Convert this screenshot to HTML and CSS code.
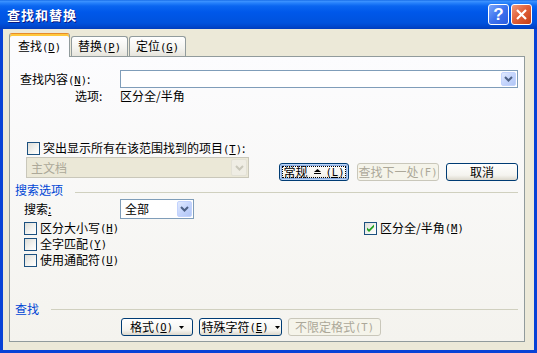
FILE: index.html
```html
<!DOCTYPE html>
<html lang="zh-CN">
<head>
    <meta charset="UTF-8">
    <title>查找和替换</title>
    <link rel="stylesheet" href="styles.css">
</head>
<body>

<div class="window">
    <div class="titlebar">
        <span class="title">查找和替换</span>
        <span class="cap-btn help">?</span>
        <span class="cap-btn close">
            <svg width="13" height="13" viewBox="0 0 13 13"><path d="M2 2 L11 11 M11 2 L2 11" stroke="#fff" stroke-width="2.2" fill="none"/></svg>
        </span>
    </div>

    <div class="client">
        <div class="tabs">
            <div class="tab active">查找<span class="key">(<u>D</u>)</span></div>
            <div class="tab">替换<span class="key">(<u>P</u>)</span></div>
            <div class="tab">定位<span class="key">(<u>G</u>)</span></div>
        </div>

        <div class="panel">
            <div class="row find">
                <span class="lbl">查找内容<span class="key">(<u>N</u>)</span>:</span>
                <div class="combo wide">
                    <span class="arrow"><svg width="9" height="6" viewBox="0 0 9 6"><polyline points="1,1 4.5,4.5 8,1" stroke="#4d6185" stroke-width="2" fill="none"/></svg></span>
                </div>
            </div>
            <div class="row opts">
                <span class="lbl">选项:</span>
                <span>区分全/半角</span>
            </div>

            <div class="row hilite">
                <span class="chk"></span>
                <span>突出显示所有在该范围找到的项目<span class="key">(<u>T</u>)</span>:</span>
            </div>
            <div class="row scope">
                <div class="combo off">
                    <span class="val">主文档</span>
                    <span class="arrow"><svg width="9" height="6" viewBox="0 0 9 6"><polyline points="1,1 4.5,4.5 8,1" stroke="#c9c7ba" stroke-width="2" fill="none"/></svg></span>
                </div>
                <div class="btns">
                    <span class="btn default w70">
                        <span class="focus">常规<svg class="less" width="7" height="6" viewBox="0 0 7 6"><polygon points="3.5,0 7,3 0,3" fill="#000"/><rect x="0" y="4" width="7" height="1" fill="#000"/></svg><span class="key">(<u>L</u>)</span></span>
                    </span>
                    <span class="btn off w82">查找下一处<span class="key">(F)</span></span>
                    <span class="btn w72">取消</span>
                </div>
            </div>

            <div class="row group">
                <span class="group-title">搜索选项</span>
                <span class="rule"></span>
            </div>
            <div class="row search">
                <span class="lbl">搜索<u>:</u></span>
                <div class="combo small">
                    <span class="val">全部</span>
                    <span class="arrow"><svg width="9" height="6" viewBox="0 0 9 6"><polyline points="1,1 4.5,4.5 8,1" stroke="#4d6185" stroke-width="2" fill="none"/></svg></span>
                </div>
            </div>
            <div class="row opt">
                <span class="item left"><span class="chk"></span>区分大小写<span class="key">(<u>H</u>)</span></span>
                <span class="item"><span class="chk on"><svg width="11" height="11" viewBox="0 0 11 11"><path d="M2 4.5 L4 6.5 L9 1.5 L9 4 L4 9 L2 7 Z" fill="#21a121"/></svg></span>区分全/半角<span class="key">(<u>M</u>)</span></span>
            </div>
            <div class="row opt">
                <span class="item left"><span class="chk"></span>全字匹配<span class="key">(<u>Y</u>)</span></span>
            </div>
            <div class="row opt">
                <span class="item left"><span class="chk"></span>使用通配符<span class="key">(<u>U</u>)</span></span>
            </div>

            <div class="bottom">
                <div class="row group low">
                    <span class="group-title">查找</span>
                    <span class="rule"></span>
                </div>
                <div class="row actions">
                    <span class="btn w72">格式<span class="key">(<u>O</u>)</span><svg class="drop" width="5" height="3" viewBox="0 0 5 3"><polygon points="0,0 5,0 2.5,3" fill="#000"/></svg></span>
                    <span class="btn w83">特殊字符<span class="key">(<u>E</u>)</span><svg class="drop" width="5" height="3" viewBox="0 0 5 3"><polygon points="0,0 5,0 2.5,3" fill="#000"/></svg></span>
                    <span class="btn off w93">不限定格式<span class="key">(T)</span></span>
                </div>
            </div>
        </div>
    </div>

    <div class="annot"></div>
</div>

</body>
</html>
```

FILE: styles.css
```css
html, body {
    margin: 0;
    padding: 0;
}

body {
    width: 537px;
    height: 353px;
    overflow: hidden;
    font-family: "Noto Sans CJK SC", "Liberation Sans", sans-serif;
    font-size: 12px;
    color: #000;
    background: #ffffff;
    white-space: nowrap;
}

.key {
    font-family: "DejaVu Sans Mono", monospace;
    font-size: 10.5px;
}

u {
    text-decoration: underline;
    text-underline-offset: 1px;
}

/* window frame */
.window {
    position: relative;
    width: 537px;
    height: 353px;
    display: flex;
    flex-direction: column;
    background: #0842d6;
}

.titlebar {
    height: 29px;
    flex: none;
    display: flex;
    align-items: center;
    padding: 0 5px 0 7px;
    background: linear-gradient(to bottom, #0a5fe0 0, #3f95ff 1px, #2681fb 3px, #0a66f0 6px, #0058ea 12px, #0055e3 18px, #0052dd 23px, #0048cf 26px, #003dbd 29px);
}

.title {
    flex: 1;
    color: #fff;
    font-weight: bold;
    font-size: 13px;
    letter-spacing: 1px;
    line-height: 16px;
    text-shadow: 1px 1px 0 #0a1883;
}

.cap-btn {
    width: 21px;
    height: 21px;
    box-sizing: border-box;
    border: 1px solid #fff;
    border-radius: 3px;
    display: flex;
    align-items: center;
    justify-content: center;
    margin-left: 2px;
}

.help {
    background: linear-gradient(135deg, #7aa6fb 0%, #3d72ee 50%, #2a5ce0 100%);
    color: #fff;
    font-family: "Liberation Sans", sans-serif;
    font-weight: bold;
    font-size: 17px;
    line-height: 19px;
}

.close {
    background: linear-gradient(135deg, #f09a7c 0%, #e2623b 45%, #c53d15 100%);
}

.client {
    flex: 1;
    margin: 0 3px 3px 3px;
    padding: 4px 9px 8px 6px;
    background: #ece9d8;
    display: flex;
    flex-direction: column;
}

/* tabs */
.tabs {
    height: 23px;
    display: flex;
    align-items: flex-end;
    position: relative;
    z-index: 2;
}

.tab {
    box-sizing: border-box;
    width: 57px;
    height: 20px;
    margin-left: 1px;
    border: 1px solid #919b9c;
    border-bottom: none;
    border-radius: 3px 3px 0 0;
    background: linear-gradient(#ffffff, #f3f3ef 60%, #e6e4dc);
    text-align: center;
    line-height: 18px;
}

.tab.active {
    width: 61px;
    height: 24px;
    margin-left: 0;
    margin-bottom: -1px;
    border-top: 1px solid #e68b2c;
    box-shadow: inset 0 2px 0 #ffc83c;
    background: #fcfcfe;
    line-height: 23px;
}

.panel {
    flex: 1;
    position: relative;
    z-index: 1;
    border: 1px solid #919b9c;
    background: linear-gradient(#fcfcfe, #f4f3ee);
    padding: 0 6px 5px 0;
    display: flex;
    flex-direction: column;
}

.row {
    display: flex;
    align-items: center;
    line-height: 14px;
}

.lbl {
    width: 100px;
    flex: none;
}

.find {
    margin-top: 13px;
    height: 18px;
    padding-left: 10px;
}

.opts {
    margin-top: 1px;
    height: 14px;
    padding-left: 10px;
}

.opts .lbl {
    padding-left: 55px;
    box-sizing: border-box;
}

.hilite {
    margin-top: 38px;
    height: 15px;
    padding-left: 17px;
}

.scope {
    margin-top: 1px;
    align-items: flex-start;
    padding-left: 16px;
}

.group {
    margin-top: 2px;
    height: 14px;
    padding-left: 5px;
}

.group-title {
    color: #0046d5;
}

.rule {
    flex: 1;
    margin-left: 12px;
    margin-top: 4px;
    border-top: 1px solid #d0d0bf;
}

.group.low {
    margin-top: 0;
    margin-bottom: 2px;
}

.group.low .rule {
    margin-top: 0;
}

.search {
    margin-top: 2px;
    height: 20px;
    padding-left: 14px;
}

.search .lbl {
    width: 96px;
}

.opt {
    height: 16px;
    padding-left: 14px;
}

.search + .opt {
    margin-top: 1px;
}

.item {
    display: flex;
    align-items: center;
}

.item.left {
    width: 340px;
}

.bottom {
    margin-top: auto;
}

.actions {
    height: 18px;
    padding-left: 111px;
    gap: 6px;
}

/* combo boxes */
.combo {
    box-sizing: border-box;
    border: 1px solid #7f9db9;
    background: #fff;
    padding: 1px;
    display: flex;
    align-items: stretch;
}

.combo.wide {
    flex: 1;
    height: 18px;
    justify-content: flex-end;
}

.combo.small {
    width: 74px;
    height: 20px;
}

.combo.off {
    width: 223px;
    height: 21px;
    border-color: #c9c7ba;
    background: #ebe8d7;
    color: #aca899;
}

.val {
    flex: 1;
    padding-left: 3px;
    display: flex;
    align-items: center;
}

.arrow {
    width: 15px;
    box-sizing: border-box;
    border: 1px solid #c3d3fd;
    border-radius: 2px;
    background: linear-gradient(135deg, #e1eafe 0%, #c5d5fc 50%, #b1c6f5 100%);
    display: flex;
    align-items: center;
    justify-content: center;
}

.off .arrow {
    width: 16px;
    border-color: #e3e1d6;
    background: #efede4;
}

/* check boxes */
.chk {
    width: 13px;
    height: 13px;
    flex: none;
    box-sizing: border-box;
    border: 1px solid #1c5180;
    background: linear-gradient(135deg, #dcdcd7 0%, #f4f4f1 60%, #ffffff 100%);
    margin-right: 3px;
    display: flex;
    align-items: center;
    justify-content: center;
}

/* buttons */
.btns {
    margin-left: auto;
    margin-top: 6px;
    display: flex;
}

.btn {
    box-sizing: border-box;
    height: 18px;
    flex: none;
    border: 1px solid #003c74;
    border-radius: 3px;
    background: linear-gradient(#ffffff, #f5f4ef 70%, #dcd8cc);
    display: flex;
    align-items: center;
    justify-content: center;
}

.btns .btn + .btn {
    margin-left: 8px;
}

.btns .btn.w72 {
    margin-left: 7px;
}

.btn.off {
    border-color: #c9c7ba;
    background: #f5f4ea;
    color: #aca899;
}

.btn.default {
    box-shadow: inset 0 0 0 1px #bcd4f6, inset 0 0 0 2px #89ade4;
}

.focus {
    box-sizing: border-box;
    width: 64px;
    height: 12px;
    flex: none;
    border: 1px dotted #000;
    display: flex;
    align-items: center;
    justify-content: center;
}

.focus > * {
    flex: none;
}

.less {
    margin: 0 5px 0 6px;
}

.drop {
    margin-left: 6px;
}

.w70 { width: 70px; }
.w72 { width: 72px; }
.w82 { width: 82px; }
.w83 { width: 83px; }
.w93 { width: 93px; }

/* red annotation drawn over the screenshot */
.annot {
    position: absolute;
    left: 17px;
    top: 235px;
    width: 167px;
    height: 18px;
    border: 1px solid #e8101a;
    pointer-events: none;
}
```
